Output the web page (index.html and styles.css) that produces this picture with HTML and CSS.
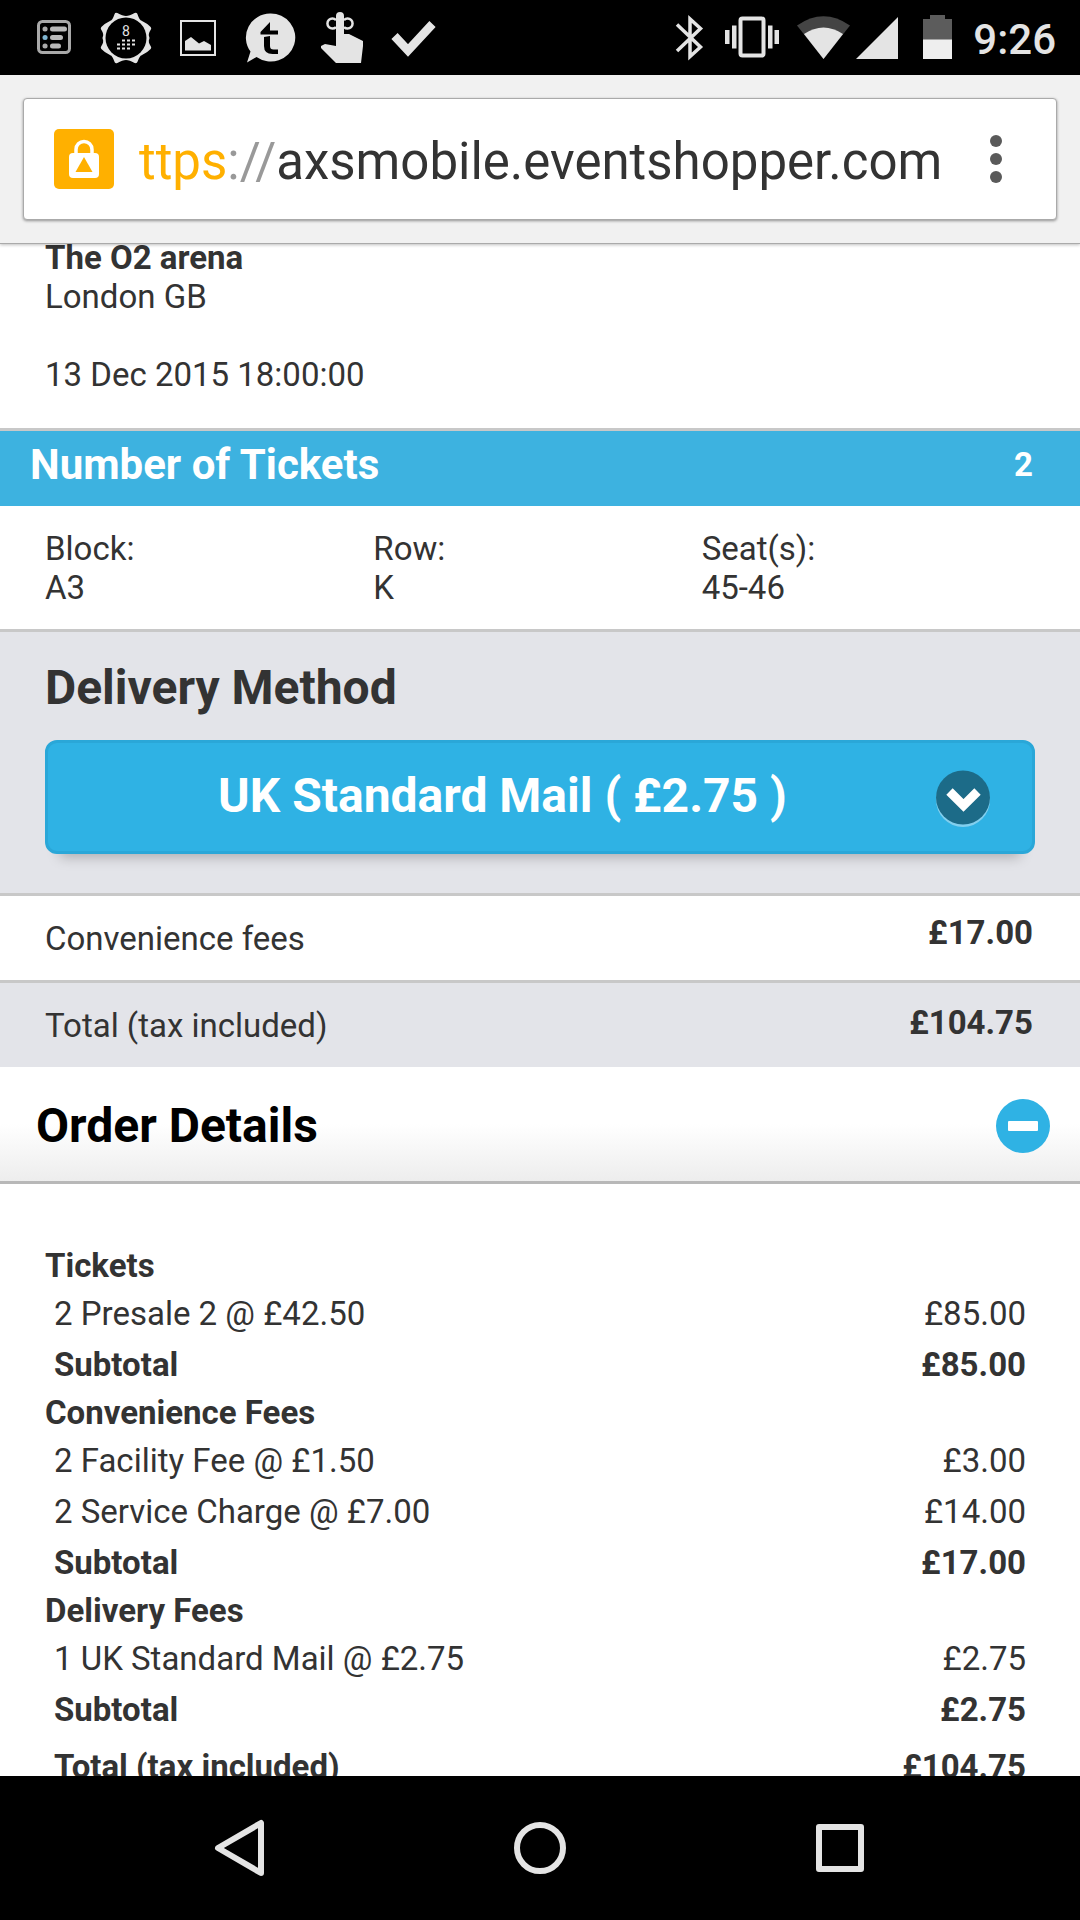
FILE: index.html
```html
<!DOCTYPE html>
<html lang="en">
<head>
<meta charset="utf-8">
<meta name="viewport" content="width=device-width, initial-scale=1">
<title>AXS checkout</title>
<link rel="stylesheet" href="styles.css">
</head>
<body>
<div class="screen">
  <header class="status">
    <div class="status-left">
      <svg width="72" height="75" viewBox="0 0 72 75" fill="none">
        <rect x="20.500" y="21.500" width="31" height="31" rx="4" stroke="#a9a9a9" stroke-width="3"/>
        <g stroke-width="5" stroke-linecap="round">
          <path d="M27 29h.1M27 46h.1" stroke="#aaa"/>
          <path d="M27 37.500h.1" stroke="#7fb4d0"/>
          <path d="M34.500 29h12M34.500 37.500h8M34.500 46h6" stroke="#b9b9b9"/>
        </g>
      </svg>
      <svg width="72" height="75" viewBox="0 0 72 75">
        <path d="M45.600 14.800Q48 22 51.200 22.800Q56 25 59.200 28.400Q55.500 34 57.500 38Q55.500 42 59.200 47.600Q56 51 51.200 53.200Q48 54 45.600 61.200Q40 58 36 58Q32 58 26.400 61.200Q24 54 20.800 53.200Q16 51 12.800 47.600Q16.500 42 14.500 38Q16.500 34 12.800 28.400Q16 25 20.800 22.800Q24 22 26.400 14.800Q32 18 36 18Q40 18 45.600 14.800Z" fill="#e4e4e4" stroke="#e4e4e4" stroke-width="4" stroke-linejoin="round"/>
        <circle cx="36" cy="38" r="20.500"/>
        <text class="badge-count" x="36" y="36" text-anchor="middle">8</text>
        <path d="M32 40.500h14M27 44.500h19M27 48.500h14" stroke="#e4e4e4" stroke-width="2" stroke-dasharray="3 2"/>
      </svg>
      <svg width="72" height="75" viewBox="0 0 72 75" fill="#e4e4e4">
        <rect x="19" y="21" width="34" height="34" fill="none" stroke="#e4e4e4" stroke-width="2"/>
        <path d="M23 50.500V41l6-4 8 6.500 5-2.500 7 4v5.500z"/>
      </svg>
      <svg width="72" height="75" viewBox="0 0 72 75" fill="#e4e4e4">
        <path d="M36 13.500a24.500 24 0 1 1-13.500 43.500L13 62.500l3.500-11A24.500 24 0 0 1 36 13.500z"/>
        <path d="M36 22v8.500h8v4H26.500V32z M30 37l6-1v10q0 3.500 3.500 3.500H44V54h-5.500Q30 54 30 46z" fill="#000"/>
      </svg>
      <svg width="72" height="75" viewBox="0 0 72 75" fill="#e4e4e4">
        <path d="M30 56V16q0-4 4-4t4 4v18h5l14 7v5l-2 17H30L15 48v-2l4-2 11 2z"/>
        <path d="M30 27a5 5 0 1 1 0-7M38 27a5 5 0 1 0 0-7" fill="none" stroke="#e4e4e4" stroke-width="2.500"/>
      </svg>
      <svg width="72" height="75" viewBox="0 0 72 75">
        <path d="M16.500 36l13.500 14.500L54.500 24" fill="none" stroke="#e4e4e4" stroke-width="8.500"/>
      </svg>
    </div>
    <div class="status-right">
      <svg width="58" height="75" viewBox="0 0 58 75">
        <path d="M17 24.500L40.500 47 30 56.500V19L40.500 28.500 17 51" fill="none" stroke="#e4e4e4" stroke-width="3.500"/>
      </svg>
      <svg width="68" height="75" viewBox="0 0 68 75" fill="#e4e4e4">
        <rect x="22.500" y="18.500" width="23" height="37" rx="2" fill="none" stroke="#e4e4e4" stroke-width="4"/>
        <path d="M14 25.500h4.500v23H14zM7 30h4.500v14H7zM50 25.500h4.500v23H50zM56.500 30H61v14h-4.500z"/>
      </svg>
      <svg width="67" height="75" viewBox="0 0 67 75">
        <path d="M37.500 59L11 25.500q26.500-18.500 53 0z" fill="#444"/>
        <path d="M37.500 59L18 34q19.500-13 39 0z" fill="#e4e4e4"/>
      </svg>
      <svg width="57" height="75" viewBox="0 0 57 75">
        <path d="M45 17v42H3z" fill="#e4e4e4"/>
      </svg>
      <svg width="55" height="75" viewBox="0 0 55 75">
        <path d="M13 59V19h7v-4h15v4h7v40z" fill="#5c5c5c"/>
        <path d="M13 39.500h29V59H13z" fill="#eee"/>
      </svg>
      <time class="clock">9:26</time>
    </div>
  </header>

  <div class="toolbar">
    <div class="omnibox">
      <button class="lock" type="button" aria-label="Connection information">
        <svg width="60" height="60" viewBox="0 0 60 60">
          <rect width="60" height="60" rx="5" fill="#ffb000"/>
          <path d="M22 26v-5.500a8 8 0 0 1 16 0V26" fill="none" stroke="#fff" stroke-width="3.500"/>
          <rect x="15" y="24" width="30" height="25" rx="4" fill="#fff"/>
          <path d="M30 28l8.500 15h-17z" fill="#ffb000"/>
        </svg>
      </button>
      <button class="url" type="button" aria-label="Address"><span class="scheme">ttps</span><span class="separator">://</span>axsmobile.eventshopper.com</button>
      <button class="menu" type="button" aria-label="Menu">
        <svg width="12" height="48" viewBox="0 0 12 48" fill="#5a5a5a"><circle cx="6" cy="6" r="6"/><circle cx="6" cy="24" r="6"/><circle cx="6" cy="42" r="6"/></svg>
      </button>
    </div>
  </div>

  <main class="page">
    <section class="venue">
      <strong>The O2 arena</strong>
      <p>London GB</p>
      <time class="date" datetime="2015-12-13T18:00">13 Dec 2015 18:00:00</time>
    </section>
    <section>
      <div class="tickets-bar"><h2>Number of Tickets</h2><strong>2</strong></div>
      <dl class="seats">
        <div><dt>Block:</dt><dd>A3</dd></div>
        <div><dt>Row:</dt><dd>K</dd></div>
        <div><dt>Seat(s):</dt><dd>45-46</dd></div>
      </dl>
    </section>
    <section class="delivery">
      <label class="delivery-title" for="delivery">Delivery Method</label>
      <div class="select-wrap">
        <select id="delivery"><option>UK Standard Mail ( £2.75 )</option></select>
        <svg class="select-icon" width="54" height="57" viewBox="0 0 54 57">
          <circle cx="27" cy="30" r="27" fill="#82cfee"/>
          <circle cx="27" cy="27.500" r="27" fill="#1c6b88"/>
          <path d="M13.500 21.500L27.500 35.500 41.500 21.500" fill="none" stroke="#fff" stroke-width="9"/>
        </svg>
      </div>
    </section>
    <div class="fee"><span>Convenience fees</span><strong>£17.00</strong></div>
    <div class="fee fee-total"><span>Total (tax included)</span><strong>£104.75</strong></div>
    <section>
      <h2 class="details-head">
        <button class="details-toggle" type="button" aria-expanded="true">Order Details
          <svg width="54" height="54" viewBox="0 0 54 54"><circle cx="27" cy="27" r="27" fill="#2fb2e4"/><rect x="12" y="22" width="30" height="10" rx="1" fill="#fff"/></svg>
        </button>
      </h2>
      <table class="order">
        <tbody>
          <tr class="group"><th colspan="2">Tickets</th></tr>
          <tr><td>2 Presale 2 @ £42.50</td><td>£85.00</td></tr>
          <tr class="sum"><td>Subtotal</td><td>£85.00</td></tr>
        </tbody>
        <tbody>
          <tr class="group"><th colspan="2">Convenience Fees</th></tr>
          <tr><td>2 Facility Fee @ £1.50</td><td>£3.00</td></tr>
          <tr><td>2 Service Charge @ £7.00</td><td>£14.00</td></tr>
          <tr class="sum"><td>Subtotal</td><td>£17.00</td></tr>
        </tbody>
        <tbody>
          <tr class="group"><th colspan="2">Delivery Fees</th></tr>
          <tr><td>1 UK Standard Mail @ £2.75</td><td>£2.75</td></tr>
          <tr class="sum"><td>Subtotal</td><td>£2.75</td></tr>
        </tbody>
        <tfoot>
          <tr class="sum grand"><td>Total (tax included)</td><td>£104.75</td></tr>
        </tfoot>
      </table>
    </section>
  </main>

  <nav class="navbar">
    <button type="button" aria-label="Back"><svg width="60" height="60" viewBox="0 0 60 60" fill="none" stroke="#e4e4e4" stroke-width="6" stroke-linejoin="round"><path d="M8 30L51 5v50z"/></svg></button>
    <button type="button" aria-label="Home"><svg width="60" height="60" viewBox="0 0 60 60" fill="none" stroke="#e4e4e4" stroke-width="6"><circle cx="30" cy="30" r="23"/></svg></button>
    <button type="button" aria-label="Recent apps"><svg width="60" height="60" viewBox="0 0 60 60" fill="none" stroke="#e4e4e4" stroke-width="6" stroke-linejoin="round"><path d="M9 9h42v42H9z"/></svg></button>
  </nav>
</div>
</body>
</html>
```

FILE: styles.css
```css
* { box-sizing: border-box; }
body, h2, p, dl, dd { margin: 0; }
body {
  font: 33px/39px Roboto, sans-serif;
  color: #333;
  background: #000;
}
button {
  font: inherit;
  color: inherit;
  background: none;
  border: 0;
  padding: 0;
}
svg { display: block; flex: none; }

.screen {
  display: flex;
  flex-direction: column;
  height: 100vh;
}

/* Status bar */
.status {
  display: flex;
  justify-content: space-between;
  flex: none;
  padding: 0 24px 0 18px;
  background: #000;
}
.status-left, .status-right { display: flex; align-items: center; }
.badge-count { font-size: 14px; fill: #e4e4e4; }
.clock {
  margin-left: 8px;
  font-size: 42px;
  font-weight: 500;
  line-height: 48px;
  padding-top: 4px;
  color: #e4e4e4;
}

/* Browser toolbar */
.toolbar {
  position: relative;
  z-index: 1;
  flex: none;
  padding: 23px;
  background: #f1f1f1;
  border-bottom: 1px solid #aaa;
  box-shadow: 0 1px 3px rgba(0, 0, 0, .25);
}
.omnibox {
  display: flex;
  align-items: center;
  height: 122px;
  padding: 0 54px 0 30px;
  background: #fff;
  border: 1px solid #aaa;
  border-radius: 4px;
  box-shadow: 0 1px 3px rgba(0, 0, 0, .4);
}
.url {
  flex: 1;
  margin-left: 25px;
  padding-top: 5px;
  font-size: 51px;
  line-height: 60px;
  text-align: left;
  white-space: nowrap;
}
.scheme { color: #ffb000; }
.separator { color: #999; }

/* Page */
.page {
  flex: 1;
  min-height: 0;
  overflow-y: auto;
  scrollbar-width: none;
  background: #fff;
}
.venue {
  margin-top: -6px;
  padding: 0 45px 34px;
  border-bottom: 3px solid #c8c8c8;
}
.date { display: block; margin-top: 39px; }

.tickets-bar {
  display: flex;
  justify-content: space-between;
  padding: 10px 47px 17px 30px;
  line-height: 48px;
  color: #fff;
  background: #3db2e0;
}
.tickets-bar h2 { font-size: 42px; }
.seats {
  display: grid;
  grid-template-columns: repeat(3, 1fr);
  padding: 23px 50px 22px 45px;
  border-bottom: 3px solid #c8c8c8;
}

.delivery {
  padding: 27px 45px 39px;
  background: #e3e4e9;
  border-bottom: 3px solid #c8c8c8;
}
.delivery-title {
  display: block;
  margin-bottom: 24px;
  font-size: 48px;
  font-weight: bold;
  line-height: 57px;
}
.select-wrap { position: relative; }
.select-wrap select {
  display: block;
  width: 100%;
  height: 114px;
  padding: 0 75px 3px 0;
  appearance: none;
  font: bold 48px/57px Roboto, sans-serif;
  text-align: center;
  text-align-last: center;
  color: #fff;
  background: #2fb2e4;
  border: 3px solid #2aa7d8;
  border-radius: 12px;
  box-shadow: 0 18px 12px -15px rgba(0, 0, 0, .25);
}
.select-icon {
  position: absolute;
  top: 30px;
  right: 45px;
  pointer-events: none;
}

.fee {
  display: flex;
  justify-content: space-between;
  align-items: flex-start;
  padding: 17px 47px 22px 45px;
  border-bottom: 3px solid #c8c8c8;
}
.fee span { padding-top: 6px; }
.fee-total {
  padding-top: 20px;
  background: #e3e4e9;
  border-bottom: 0;
}
.fee-total span { padding-top: 3px; }

.details-head {
  background: linear-gradient(#fff 50%, #ededed);
  border-bottom: 3px solid #b8b8b8;
}
.details-toggle {
  display: flex;
  justify-content: space-between;
  align-items: center;
  width: 100%;
  padding: 30px 30px 27px 36px;
  font-size: 48px;
  line-height: 57px;
  color: #000;
}

.order {
  width: 100%;
  margin-top: 59px;
  border-collapse: collapse;
}
.order th { padding: 3px 45px; text-align: left; }
.order td { padding: 6px 54px; }
.order td:last-child { text-align: right; }
.sum { font-weight: bold; }
.order .grand td { padding-top: 12px; }

/* Navigation bar */
.navbar {
  display: grid;
  grid-template-columns: repeat(3, 1fr);
  place-items: center;
  flex: none;
  padding: 42px 90px;
  background: #000;
}
```
